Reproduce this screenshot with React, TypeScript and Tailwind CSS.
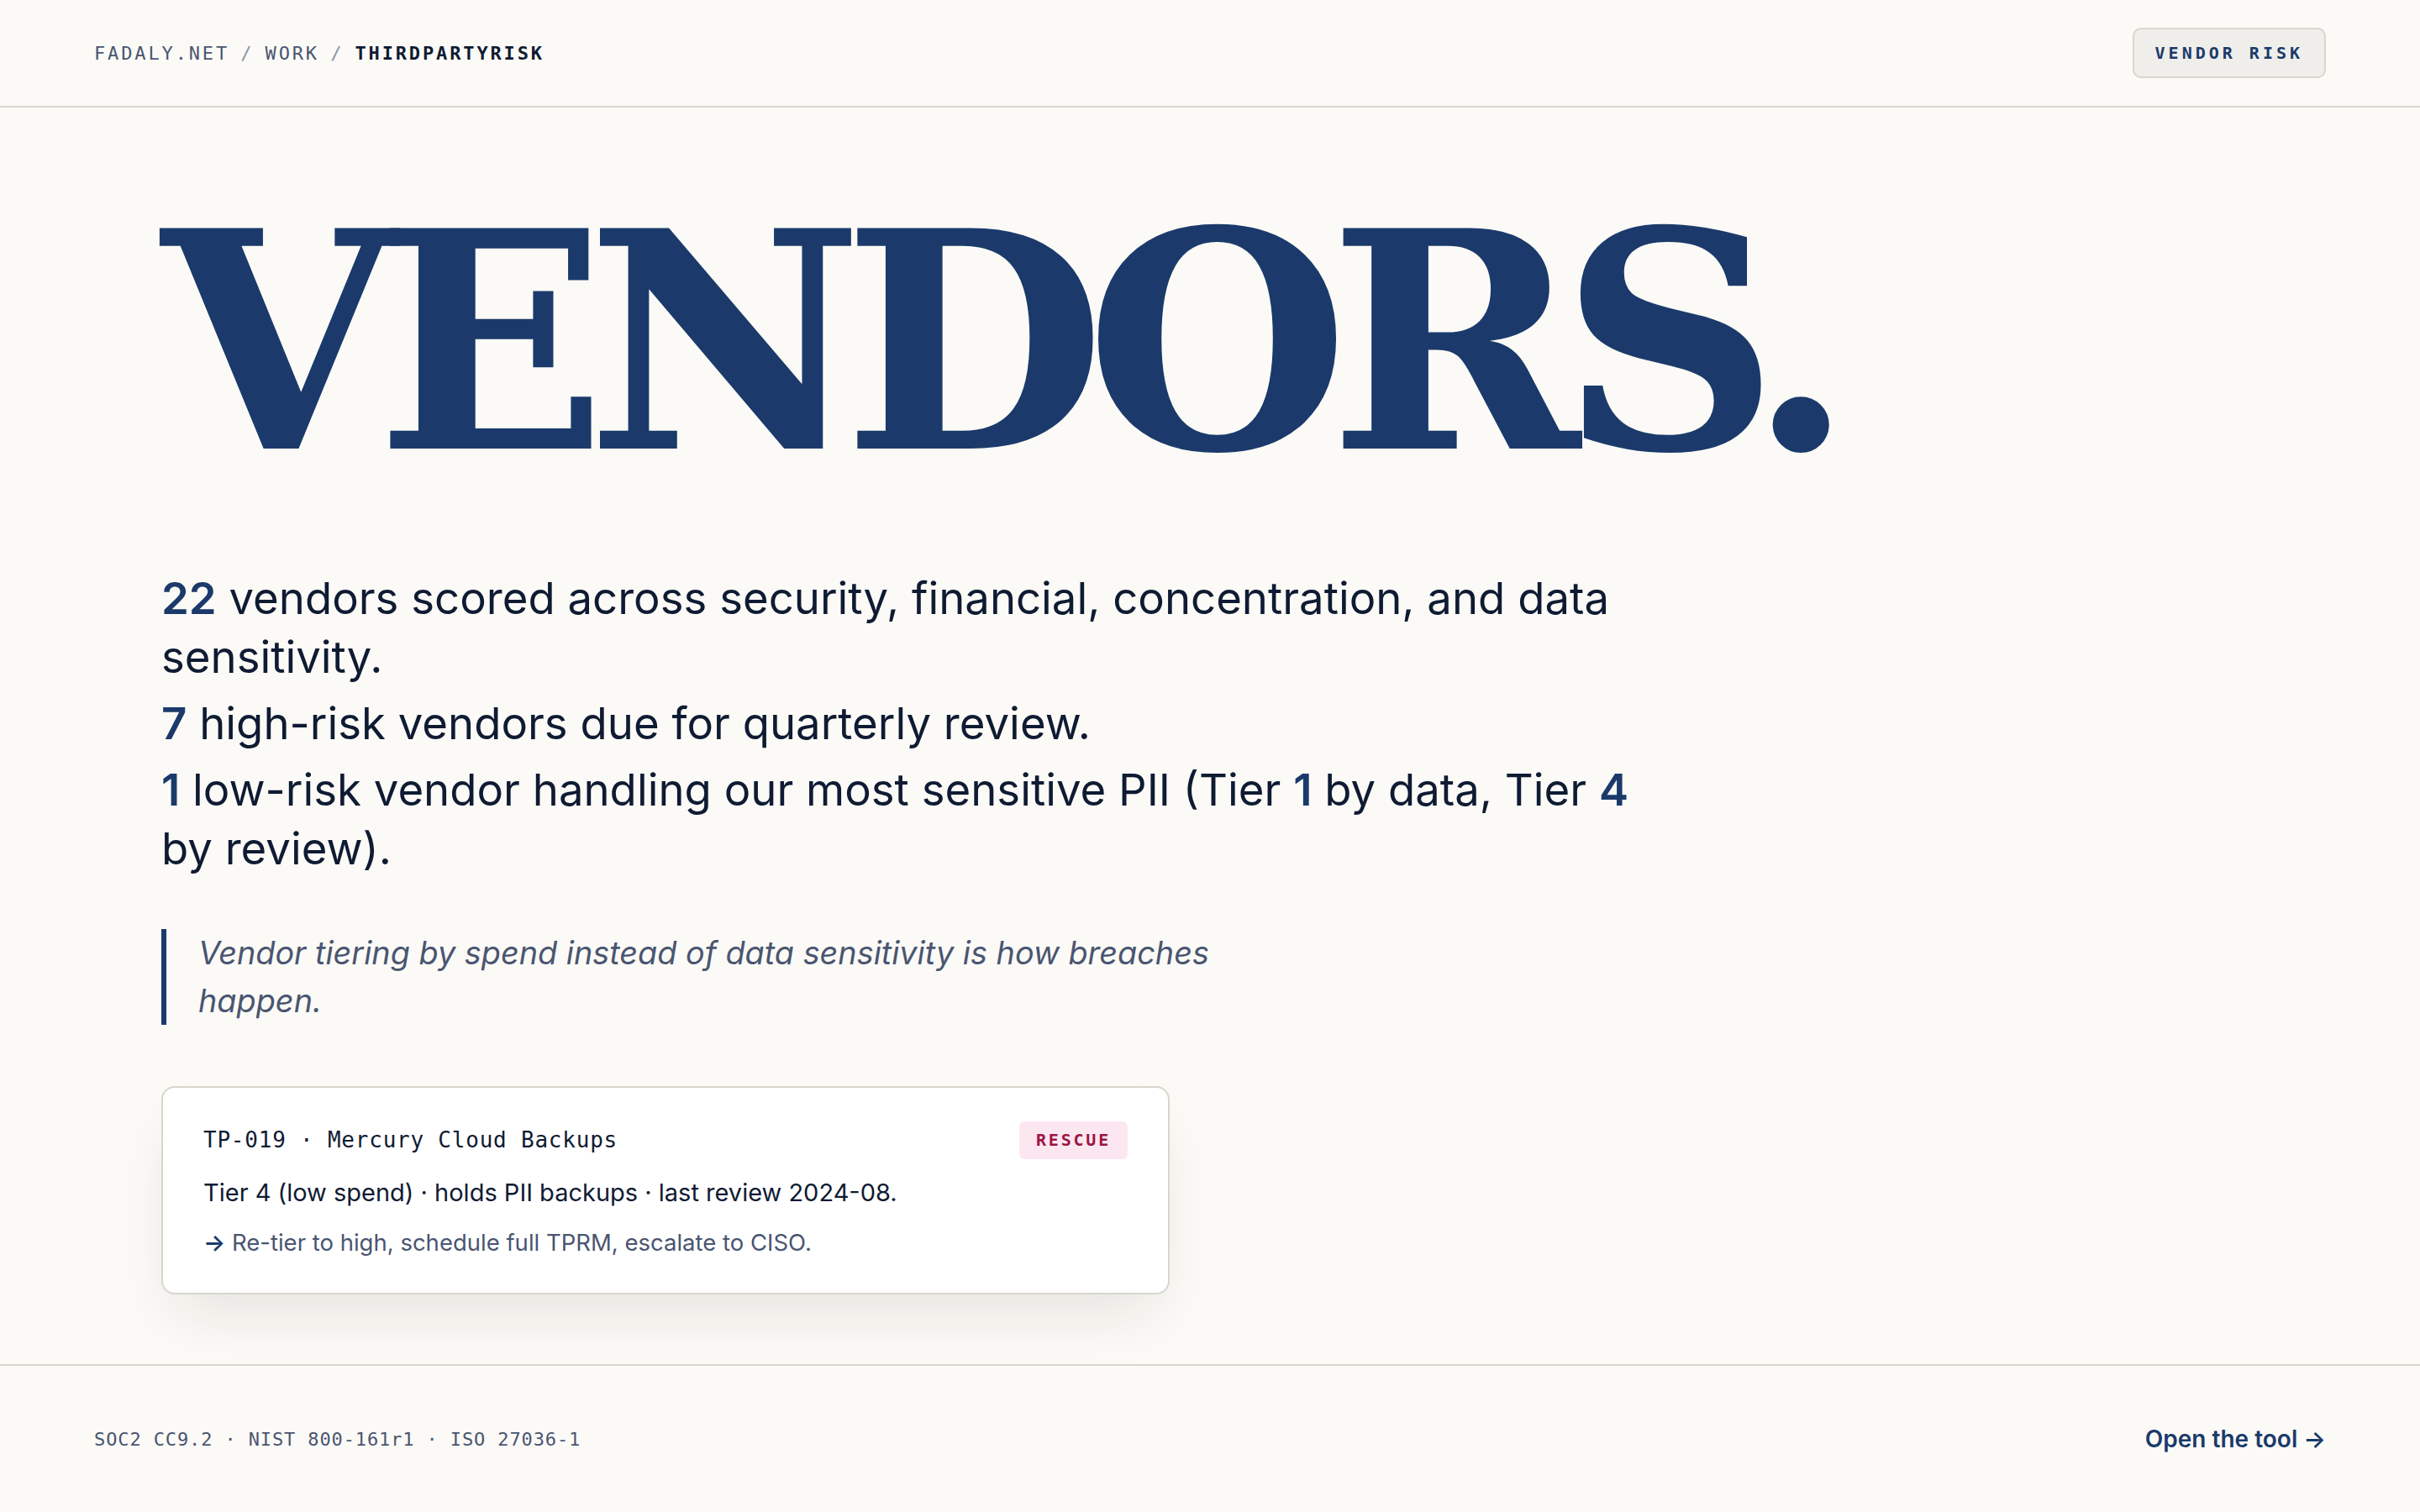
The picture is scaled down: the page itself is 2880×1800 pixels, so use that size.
import React from 'react';

const mono = { fontFamily: '"DejaVu Sans Mono", "Liberation Mono", monospace' };

export default function App() {
  return (
    <div
      className="min-h-screen flex flex-col bg-[#fbfaf6] text-[#0f1b33]"
      style={{ fontFamily: 'Inter, "Noto Sans", sans-serif' }}
    >
      {/* Top bar */}
      <header className="h-32 shrink-0 border-b-2 border-[#d8d6cc] px-28 flex items-center justify-between">
        <nav className="text-[22px] tracking-[0.13em] uppercase flex items-center gap-[0.6em]" style={mono}>
          <span className="text-[#4a5571]">fadaly.net</span>
          <span className="text-[#8a93a8]">/</span>
          <span className="text-[#4a5571]">work</span>
          <span className="text-[#8a93a8]">/</span>
          <span className="text-[#0f1b33] font-semibold">thirdpartyrisk</span>
        </nav>
        <div
          className="h-[60px] px-[25px] flex items-center rounded-[10px] border-2 border-[#d8d6cc] bg-[#efeeea] text-[20px] font-bold tracking-[0.2em] text-[#1b3a6b]"
          style={mono}
        >
          VENDOR RISK
        </div>
      </header>

      <main className="flex-1 px-48 pt-[71px]">
        <h1
          className="text-[360px] leading-[1.16] font-bold tracking-[-0.066em] text-[#1b3a6b]"
          style={{ fontFamily: '"DejaVu Serif", "Liberation Serif", serif' }}
        >
          VENDORS.
        </h1>

        <div className="mt-[60px] max-w-[1780px] text-[52.7px] leading-[70px] text-[#0f1b33]">
          <p>
            <span className="font-semibold text-[#1b3a6b]">22</span> vendors scored across security, financial,
            concentration, and data sensitivity.
          </p>
          <p className="mt-[9px]">
            <span className="font-semibold text-[#1b3a6b]">7</span> high-risk vendors due for quarterly review.
          </p>
          <p className="mt-[9px]">
            <span className="font-semibold text-[#1b3a6b]">1</span> low-risk vendor handling our most sensitive PII
            (Tier <span className="font-semibold text-[#1b3a6b]">1</span> by data, Tier{' '}
            <span className="font-semibold text-[#1b3a6b]">4</span> by review).
          </p>
        </div>

        <blockquote className="mt-[61px] max-w-[1310px] border-l-[6px] border-[#1b3a6b] pl-[38px] text-[37.8px] leading-[57px] italic text-[#4a5571]">
          Vendor tiering by spend instead of data sensitivity is how breaches happen.
        </blockquote>

        <div className="mt-[73px] w-[1200px] rounded-2xl border-2 border-[#d8d6cc] bg-white px-12 py-10 shadow-[0_36px_72px_-16px_rgba(30,30,20,0.10)]">
          <div className="flex items-center justify-between h-[45px]">
            <span className="text-[26px] tracking-[0.03em] text-[#0f1b33]" style={mono}>
              TP-019 · Mercury Cloud Backups
            </span>
            <span
              className="h-[45px] px-5 flex items-center rounded-[6px] bg-[#fce7f0] text-[20px] font-bold tracking-[0.14em] text-[#9d1445]"
              style={mono}
            >
              RESCUE
            </span>
          </div>
          <p className="mt-[18px] text-[29px] leading-[44px] text-[#0f1b33]">
            Tier 4 (low spend) · holds PII backups · last review 2024-08.
          </p>
          <p className="mt-[17px] text-[27.5px] leading-[40px] text-[#4a5571]">
            <span className="text-[#1b3a6b] font-semibold">→</span> Re-tier to high, schedule full TPRM, escalate to CISO.
          </p>
        </div>
      </main>

      {/* Footer */}
      <footer className="h-[176px] shrink-0 border-t-2 border-[#d8d6cc] px-28 flex items-center justify-between">
        <span className="text-[22px] tracking-[0.04em] text-[#4a5571]" style={mono}>
          SOC2 CC9.2 · NIST 800-161r1 · ISO 27036-1
        </span>
        <a href="#" className="text-[28px] font-semibold text-[#1b3a6b]">
          Open the tool →
        </a>
      </footer>
    </div>
  );
}
